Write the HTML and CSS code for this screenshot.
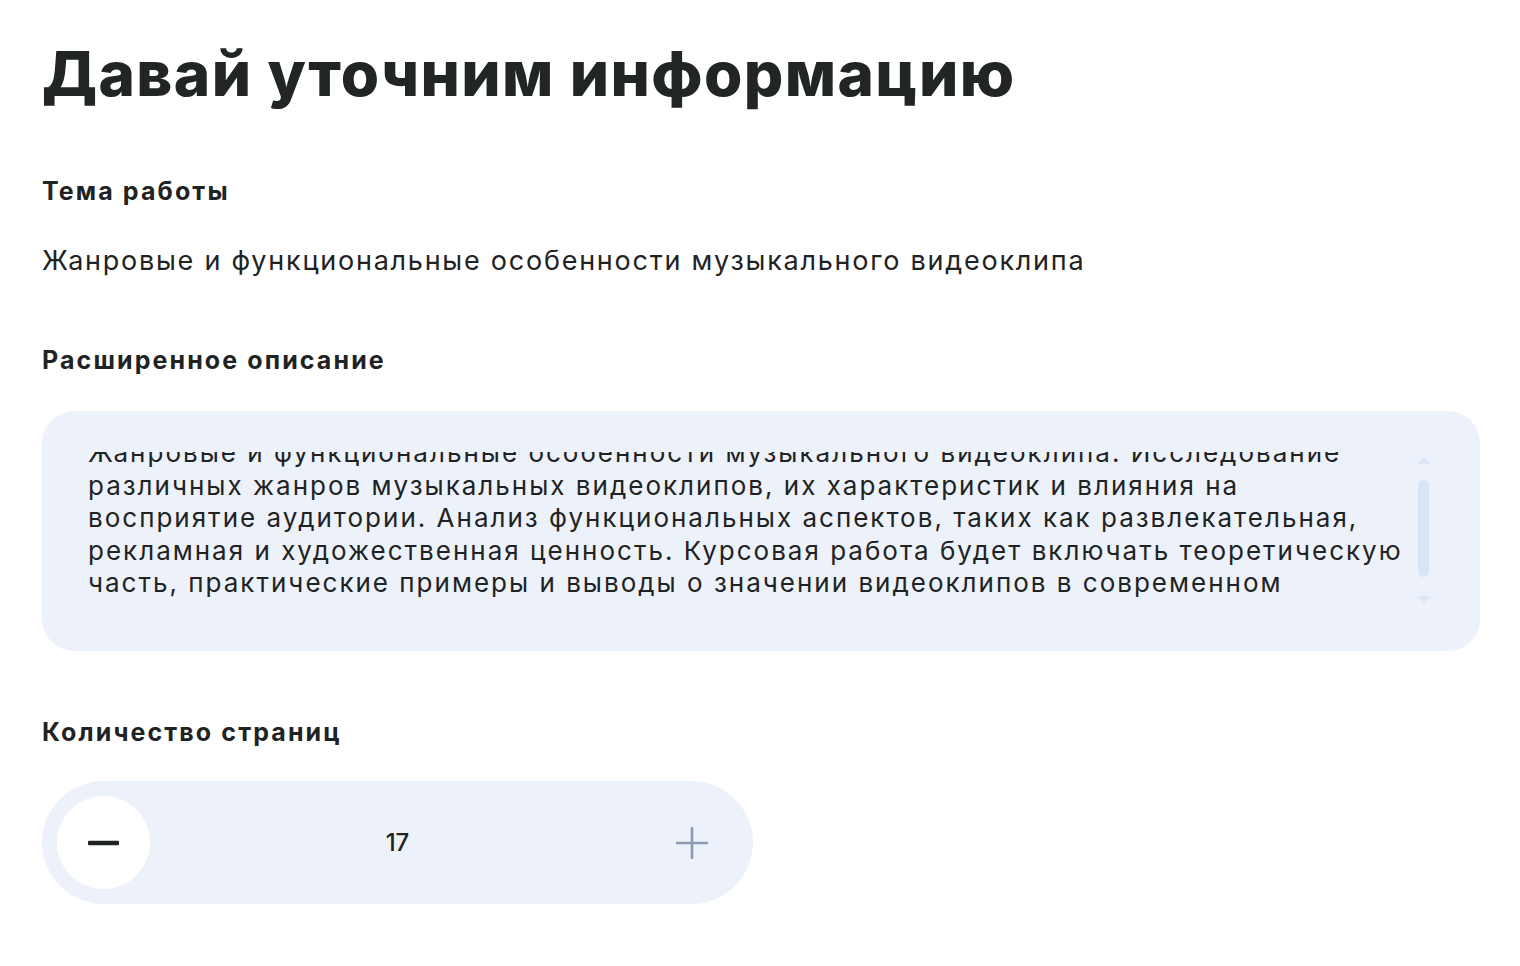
FILE: index.html
```html
<!DOCTYPE html>
<html lang="ru">
<head>
<meta charset="utf-8">
<title>Давай уточним информацию</title>
<link rel="stylesheet" href="styles.css">
</head>
<body>
<main class="page">
  <h1 class="title">Давай уточним информацию</h1>

  <section class="field field-topic">
    <h2 class="label">Тема работы</h2>
    <p class="value">Жанровые и функциональные особенности музыкального видеоклипа</p>
  </section>

  <section class="field field-desc">
    <h2 class="label">Расширенное описание</h2>
    <div class="desc">
      <div class="desc-view">
        <p class="desc-text">Жанровые и функциональные особенности музыкального видеоклипа. Исследование<br>различных жанров музыкальных видеоклипов, их характеристик и влияния на<br>восприятие аудитории. Анализ функциональных аспектов, таких как развлекательная,<br>рекламная и художественная ценность. Курсовая работа будет включать теоретическую<br>часть, практические примеры и выводы о значении видеоклипов в современном<br>музыкальном мире.</p>
      </div>
      <div class="scrollbar">
        <span class="arrow arrow-up"></span>
        <span class="track"><span class="thumb"></span></span>
        <span class="arrow arrow-down"></span>
      </div>
    </div>
  </section>

  <section class="field field-pages">
    <h2 class="label">Количество страниц</h2>
    <div class="stepper">
      <button class="step-btn minus" type="button" aria-label="Уменьшить">
        <svg width="32" height="6" viewBox="0 0 32 6"><rect x="0" y="0.8" width="31" height="4.4" rx="1" fill="#1f2323"/></svg>
      </button>
      <span class="count">17</span>
      <button class="step-btn plus" type="button" aria-label="Увеличить">
        <svg width="32" height="32" viewBox="0 0 32 32"><path d="M16 1v30M1 16h30" stroke="#8d9bb3" stroke-width="2.6" stroke-linecap="round"/></svg>
      </button>
    </div>
  </section>
</main>
</body>
</html>
```

FILE: styles.css
```css
* { box-sizing: border-box; }
html, body { margin: 0; padding: 0; background: #ffffff; }
body {
  font-family: "Inter", "Noto Sans", "DejaVu Sans", sans-serif;
  color: #1f2323;
}
.page {
  padding: 34px 40px 40px 42px;
}
.title {
  margin: 0;
  font-size: 62px;
  line-height: 80px;
  font-weight: 800;
  letter-spacing: 1.4px;
  color: #212525;
}
.field-topic { margin-top: 61px; }
.field-desc { margin-top: 67px; }
.field-pages { margin-top: 65px; }
.label {
  margin: 0;
  font-size: 25px;
  line-height: 32px;
  font-weight: 700;
  letter-spacing: 2.1px;
  color: #1f2323;
}
.value {
  margin: 38px 0 0;
  font-size: 27px;
  line-height: 32px;
  font-weight: 400;
  letter-spacing: 1.75px;
}
.desc {
  margin-top: 35px;
  height: 240px;
  border-radius: 32px;
  background: #edf2fa;
  display: flex;
  align-items: flex-start;
  padding: 41px 49px 0 46px;
}
.desc-view {
  flex: 1;
  height: 156px;
  overflow: hidden;
}
.desc-text {
  margin: -15px 0 0;
  font-size: 26px;
  line-height: 32.5px;
  letter-spacing: 2px;
  white-space: nowrap;
}
.scrollbar {
  width: 15px;
  margin-top: 5px;
  display: flex;
  flex-direction: column;
  align-items: center;
}
.arrow {
  width: 0; height: 0;
  border-left: 7px solid transparent;
  border-right: 7px solid transparent;
}
.arrow-up { border-bottom: 7px solid #dde6f7; }
.arrow-down { border-top: 7px solid #dde6f7; }
.track {
  height: 132px;
  display: flex;
  align-items: flex-start;
  padding-top: 16px;
}
.thumb {
  width: 11px;
  height: 97px;
  border-radius: 6px;
  background: #dae4f8;
}
.stepper {
  margin-top: 33px;
  width: 711px;
  height: 123px;
  border-radius: 62px;
  background: #edf2fa;
  display: grid;
  grid-template-columns: 1fr auto 1fr;
  align-items: center;
  padding: 0 30px;
}
.step-btn {
  border: 0;
  padding: 0;
  display: flex;
  align-items: center;
  justify-content: center;
  cursor: pointer;
}
.minus {
  justify-self: start;
  margin-left: -15px;
  width: 93px;
  height: 93px;
  border-radius: 50%;
  background: #ffffff;
}
.plus {
  justify-self: end;
  margin-right: 15px;
  width: 32px;
  height: 32px;
  background: transparent;
}
.count {
  font-size: 24px;
  font-weight: 500;
  color: #1f2323;
}
```
